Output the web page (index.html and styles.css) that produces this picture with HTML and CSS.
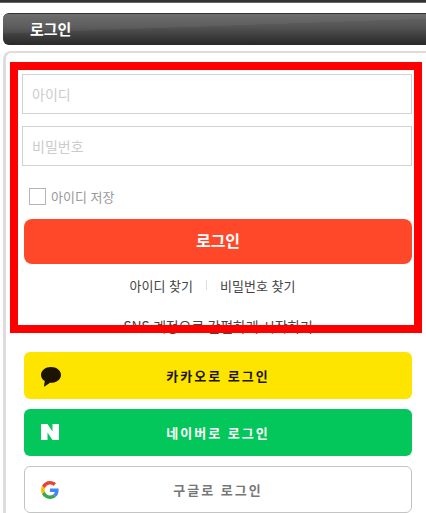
FILE: index.html
```html
<!DOCTYPE html>
<html lang="ko">
<head>
  <meta charset="UTF-8">
  <meta name="viewport" content="width=device-width, initial-scale=1.0">
  <title>로그인</title>
  <link rel="stylesheet" href="styles.css">
</head>
<body>

  <div class="top-line"></div>

  <div class="title-bar">
    <h1 class="title">로그인</h1>
  </div>

  <div class="card">
    <form class="login-form">
      <input class="field" type="text" placeholder="아이디">
      <input class="field" type="password" placeholder="비밀번호">

      <label class="save-id">
        <span class="check-box"></span>
        아이디 저장
      </label>

      <button class="login-btn" type="button">로그인</button>

      <div class="find-links">
        <a href="#">아이디 찾기</a>
        <span class="divider"></span>
        <a href="#">비밀번호 찾기</a>
      </div>

      <p class="sns-title">SNS 계정으로 간편하게 시작하기</p>

      <div class="sns-list">
        <a class="sns-btn kakao" href="#">
          <svg class="sns-icon" viewBox="0 0 20 20">
            <path fill="#1c1300" d="M10 0C4.500 0 0 3.500 0 7.900c0 2.500 1.500 4.700 3.800 6.100L3 19.200c0 .3.200.4.500.3L9 15.800h1c5.500 0 10-3.500 10-7.900S15.500 0 10 0z"/>
          </svg>
          <span>카카오로 로그인</span>
        </a>
        <a class="sns-btn naver" href="#">
          <svg class="sns-icon" viewBox="0 0 18 16">
            <path fill="#fff" d="M0 0h6.500l5 7.500V0H18v16h-6.500l-5-7.500V16H0z"/>
          </svg>
          <span>네이버로 로그인</span>
        </a>
        <a class="sns-btn google" href="#">
          <svg class="sns-icon" viewBox="0 0 48 48">
            <path fill="#ea4335" d="M24 9.500c3.500 0 6.700 1.200 9.200 3.600l6.800-6.800C35.900 2.400 30.500 0 24 0 14.600 0 6.500 5.400 2.600 13.200l8 6.200C12.400 13.600 17.700 9.500 24 9.500z"/>
            <path fill="#4285f4" d="M47 24.500c0-1.600-.1-3.100-.4-4.500H24v9h12.900c-.6 3-2.200 5.500-4.800 7.200l7.700 6C44.300 38 47 31.800 47 24.500z"/>
            <path fill="#fbbc05" d="M10.500 28.600c-.5-1.400-.8-3-.8-4.600s.3-3.200.8-4.600l-8-6.200C.9 16.500 0 20.100 0 24s.9 7.500 2.600 10.800z"/>
            <path fill="#34a853" d="M24 48c6.500 0 11.900-2.100 15.900-5.800l-7.700-6c-2.200 1.400-4.900 2.300-8.200 2.300-6.300 0-11.600-4.200-13.500-9.900l-8 6.200C6.500 42.600 14.600 48 24 48z"/>
          </svg>
          <span>구글로 로그인</span>
        </a>
      </div>
    </form>
  </div>

  <div class="red-frame"></div>

</body>
</html>
```

FILE: styles.css
```css
html, body {
  height: 513px;
  overflow: hidden;
}

body {
  margin: 0;
  padding: 0;
  position: relative;
  background-color: #fff;
  font-family: "Noto Sans CJK KR", "Noto Sans", sans-serif;
  color: #444;
}

.top-line {
  height: 2px;
  background-color: #333;
  border-bottom: 1px solid #666;
}

.title-bar {
  height: 32px;
  margin: 10px 0 0 3px;
  padding: 0 0 2px 27px;
  display: flex;
  align-items: center;
  border-radius: 6px 0 0 6px;
  border-top: 1px solid #333;
  box-sizing: border-box;
  background:
    linear-gradient(178deg, rgba(255, 255, 255, .05) 42%, transparent 43%),
    linear-gradient(#666, #555 40%, #3a3a3a 75%, #292929);
}

.title {
  margin: 0;
  font-size: 15px;
  font-weight: 700;
  color: #fff;
}

.card {
  height: 462px;
  margin: 6px 0 0 3px;
  box-sizing: border-box;
  border-top: 2px solid #ddd;
  border-left: 3px solid #ddd;
  border-radius: 8px 0 0 0;
  padding: 21px 0 0 18px;
}

.login-form {
  width: 392px;
  display: flex;
  flex-direction: column;
}

.field {
  width: 390px;
  height: 40px;
  margin: 0 0 12px -2px;
  padding: 0 9px;
  box-sizing: border-box;
  border: 1px solid #d0d3d6;
  background-color: #fff;
  font-family: inherit;
  font-size: 14px;
  outline: none;
}

.field::placeholder {
  color: #ccc;
}

.save-id {
  display: flex;
  align-items: center;
  gap: 5px;
  margin: 10px 0 14px 5px;
  font-size: 13px;
  line-height: 17px;
  color: #999;
}

.check-box {
  width: 15px;
  height: 15px;
  border: 1px solid #b5b5b5;
}

.login-btn {
  width: 388px;
  height: 45px;
  padding: 0 0 3px;
  border: 0;
  border-radius: 8px;
  background-color: #ff4829;
  color: #fff;
  font-family: inherit;
  font-size: 16px;
  font-weight: 700;
}

.find-links {
  width: 388px;
  height: 44px;
  padding: 0 11px 2px 0;
  box-sizing: border-box;
  display: flex;
  justify-content: center;
  align-items: center;
  gap: 13px;
  font-size: 13px;
}

.find-links a {
  color: #444;
  text-decoration: none;
}

.divider {
  width: 1px;
  height: 10px;
  background-color: #ddd;
}

.sns-title {
  width: 388px;
  height: 44px;
  margin: 0;
  padding: 10px 0 0;
  box-sizing: border-box;
  text-align: center;
  font-size: 14px;
  letter-spacing: -.2px;
  line-height: 16px;
}

.sns-list {
  display: flex;
  flex-direction: column;
  gap: 10px;
}

.sns-btn {
  position: relative;
  width: 388px;
  height: 47px;
  display: flex;
  justify-content: center;
  align-items: center;
  box-sizing: border-box;
  border-radius: 6px;
  font-size: 13px;
  font-weight: 700;
  letter-spacing: 2px;
  text-decoration: none;
}

.sns-icon {
  position: absolute;
  left: 17px;
  top: 15px;
  width: 20px;
  height: 20px;
}

.kakao {
  background-color: #fee500;
  color: #1c1300;
}

.naver {
  background-color: #03c75a;
  color: #fff;
}

.naver .sns-icon {
  width: 18px;
  height: 16px;
}

.google {
  border: 1px solid #c4c4c4;
  background-color: #fff;
  color: #777;
}

.google .sns-icon {
  left: 16px;
  top: 14px;
  width: 18px;
  height: 18px;
}

/* annotation laid over the form */
.red-frame {
  position: absolute;
  left: 10px;
  top: 62px;
  width: 412px;
  height: 271px;
  box-sizing: border-box;
  border: 8px solid #f00;
}
```
